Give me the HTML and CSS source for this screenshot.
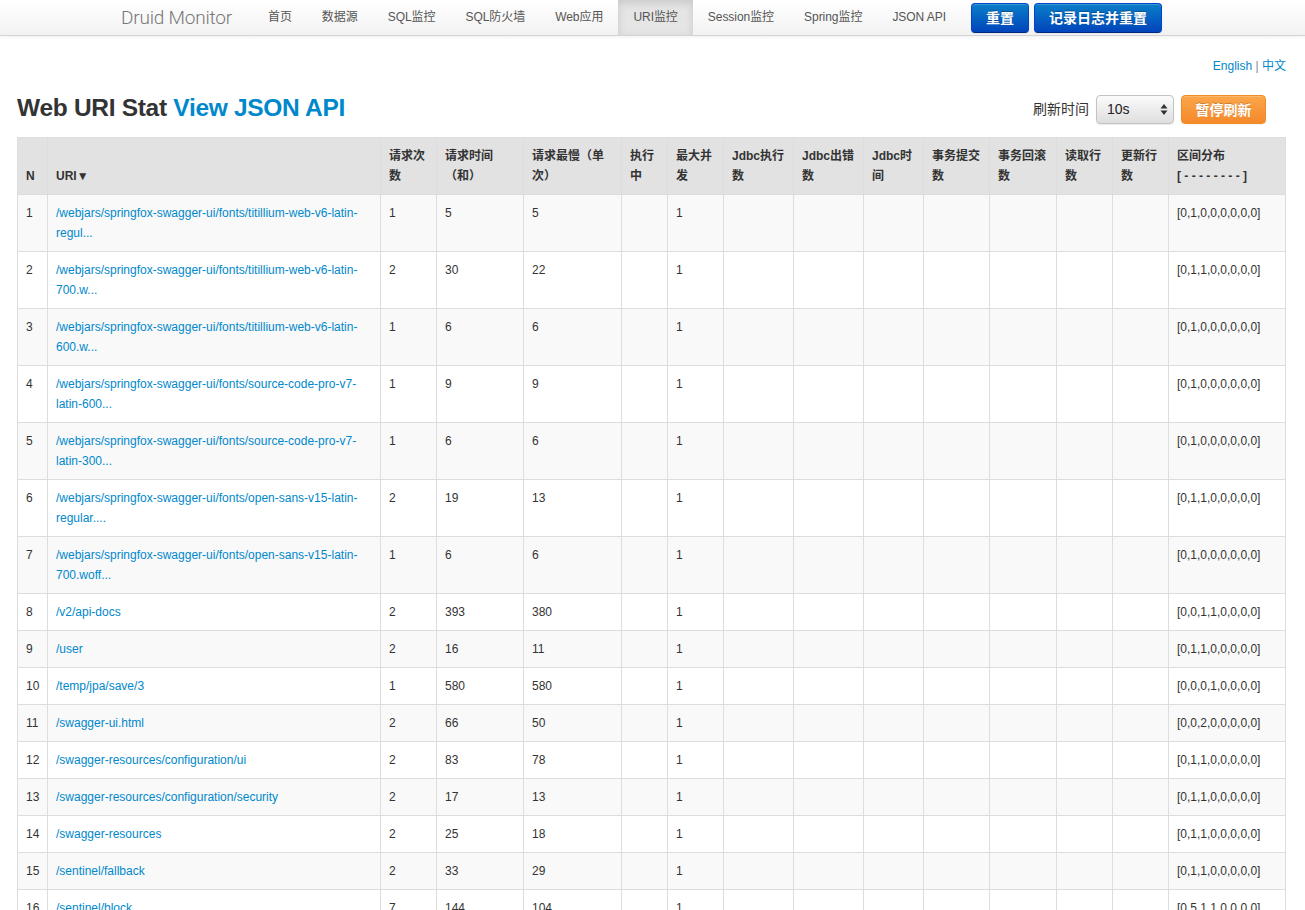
FILE: index.html
```html
<!DOCTYPE html>
<html lang="zh-CN">
<head>
<meta charset="utf-8">
<title>Druid Monitor - URI监控</title>
<link rel="stylesheet" href="styles.css">
</head>
<body>
<div class="navbar">
  <span class="brand">Druid Monitor</span>
  <a class="nav-link">首页</a>
  <a class="nav-link">数据源</a>
  <a class="nav-link">SQL监控</a>
  <a class="nav-link">SQL防火墙</a>
  <a class="nav-link">Web应用</a>
  <a class="nav-link active">URI监控</a>
  <a class="nav-link">Session监控</a>
  <a class="nav-link">Spring监控</a>
  <a class="nav-link">JSON API</a>
  <div class="nav-buttons">
    <button class="btn-primary">重置</button>
    <button class="btn-primary">记录日志并重置</button>
  </div>
</div>

<div class="main">
  <div class="lang"><a>English</a> <span class="sep">|</span> <a>中文</a></div>
  <div class="titlebar">
    <h3>Web URI Stat <a class="json-link">View JSON API</a></h3>
    <div class="refresh">
      <span class="refresh-label">刷新时间</span>
      <div class="select">
        <span>10s</span>
        <svg width="8" height="13" viewBox="0 0 8 13"><path d="M4 1 L7.5 5.5 H0.5 Z M4 12 L7.5 7.5 H0.5 Z" fill="#333"/></svg>
      </div>
      <button class="btn-warning">暂停刷新</button>
    </div>
  </div>

  <table class="stat">
    <colgroup>
      <col class="c-n">
      <col>
      <col class="c-56">
      <col class="c-87">
      <col class="c-98">
      <col class="c-46">
      <col class="c-56">
      <col class="c-70">
      <col class="c-70">
      <col class="c-60">
      <col class="c-66">
      <col class="c-67">
      <col class="c-56">
      <col class="c-56">
      <col class="c-last">
    </colgroup>
    <thead>
      <tr>
        <th>N</th>
        <th>URI▼</th>
        <th>请求次数</th>
        <th>请求时间（和）</th>
        <th>请求最慢（单次）</th>
        <th>执行中</th>
        <th>最大并发</th>
        <th>Jdbc执行数</th>
        <th>Jdbc出错数</th>
        <th>Jdbc时间</th>
        <th>事务提交数</th>
        <th>事务回滚数</th>
        <th>读取行数</th>
        <th>更新行数</th>
        <th>区间分布<br>[ - - - - - - - - ]</th>
      </tr>
    </thead>
    <tbody>
      <tr><td>1</td><td><a>/webjars/springfox-swagger-ui/fonts/titillium-web-v6-latin-regul...</a></td><td>1</td><td>5</td><td>5</td><td></td><td>1</td><td></td><td></td><td></td><td></td><td></td><td></td><td></td><td>[0,1,0,0,0,0,0,0]</td></tr>
      <tr><td>2</td><td><a>/webjars/springfox-swagger-ui/fonts/titillium-web-v6-latin-700.w...</a></td><td>2</td><td>30</td><td>22</td><td></td><td>1</td><td></td><td></td><td></td><td></td><td></td><td></td><td></td><td>[0,1,1,0,0,0,0,0]</td></tr>
      <tr><td>3</td><td><a>/webjars/springfox-swagger-ui/fonts/titillium-web-v6-latin-600.w...</a></td><td>1</td><td>6</td><td>6</td><td></td><td>1</td><td></td><td></td><td></td><td></td><td></td><td></td><td></td><td>[0,1,0,0,0,0,0,0]</td></tr>
      <tr><td>4</td><td><a>/webjars/springfox-swagger-ui/fonts/source-code-pro-v7-latin-600...</a></td><td>1</td><td>9</td><td>9</td><td></td><td>1</td><td></td><td></td><td></td><td></td><td></td><td></td><td></td><td>[0,1,0,0,0,0,0,0]</td></tr>
      <tr><td>5</td><td><a>/webjars/springfox-swagger-ui/fonts/source-code-pro-v7-latin-300...</a></td><td>1</td><td>6</td><td>6</td><td></td><td>1</td><td></td><td></td><td></td><td></td><td></td><td></td><td></td><td>[0,1,0,0,0,0,0,0]</td></tr>
      <tr><td>6</td><td><a>/webjars/springfox-swagger-ui/fonts/open-sans-v15-latin-regular....</a></td><td>2</td><td>19</td><td>13</td><td></td><td>1</td><td></td><td></td><td></td><td></td><td></td><td></td><td></td><td>[0,1,1,0,0,0,0,0]</td></tr>
      <tr><td>7</td><td><a>/webjars/springfox-swagger-ui/fonts/open-sans-v15-latin-700.woff...</a></td><td>1</td><td>6</td><td>6</td><td></td><td>1</td><td></td><td></td><td></td><td></td><td></td><td></td><td></td><td>[0,1,0,0,0,0,0,0]</td></tr>
      <tr><td>8</td><td><a>/v2/api-docs</a></td><td>2</td><td>393</td><td>380</td><td></td><td>1</td><td></td><td></td><td></td><td></td><td></td><td></td><td></td><td>[0,0,1,1,0,0,0,0]</td></tr>
      <tr><td>9</td><td><a>/user</a></td><td>2</td><td>16</td><td>11</td><td></td><td>1</td><td></td><td></td><td></td><td></td><td></td><td></td><td></td><td>[0,1,1,0,0,0,0,0]</td></tr>
      <tr><td>10</td><td><a>/temp/jpa/save/3</a></td><td>1</td><td>580</td><td>580</td><td></td><td>1</td><td></td><td></td><td></td><td></td><td></td><td></td><td></td><td>[0,0,0,1,0,0,0,0]</td></tr>
      <tr><td>11</td><td><a>/swagger-ui.html</a></td><td>2</td><td>66</td><td>50</td><td></td><td>1</td><td></td><td></td><td></td><td></td><td></td><td></td><td></td><td>[0,0,2,0,0,0,0,0]</td></tr>
      <tr><td>12</td><td><a>/swagger-resources/configuration/ui</a></td><td>2</td><td>83</td><td>78</td><td></td><td>1</td><td></td><td></td><td></td><td></td><td></td><td></td><td></td><td>[0,1,1,0,0,0,0,0]</td></tr>
      <tr><td>13</td><td><a>/swagger-resources/configuration/security</a></td><td>2</td><td>17</td><td>13</td><td></td><td>1</td><td></td><td></td><td></td><td></td><td></td><td></td><td></td><td>[0,1,1,0,0,0,0,0]</td></tr>
      <tr><td>14</td><td><a>/swagger-resources</a></td><td>2</td><td>25</td><td>18</td><td></td><td>1</td><td></td><td></td><td></td><td></td><td></td><td></td><td></td><td>[0,1,1,0,0,0,0,0]</td></tr>
      <tr><td>15</td><td><a>/sentinel/fallback</a></td><td>2</td><td>33</td><td>29</td><td></td><td>1</td><td></td><td></td><td></td><td></td><td></td><td></td><td></td><td>[0,1,1,0,0,0,0,0]</td></tr>
      <tr><td>16</td><td><a>/sentinel/block</a></td><td>7</td><td>144</td><td>104</td><td></td><td>1</td><td></td><td></td><td></td><td></td><td></td><td></td><td></td><td>[0,5,1,1,0,0,0,0]</td></tr>
    </tbody>
  </table>
</div>
</body>
</html>
```

FILE: styles.css
```css
body {
  margin: 0;
  font-family: "Liberation Sans", "Noto Sans CJK SC", sans-serif;
  font-size: 12px;
  line-height: 20px;
  color: #333;
  background: #fff;
}

a {
  color: #0088cc;
  text-decoration: none;
  cursor: pointer;
}

/* ---------- navbar ---------- */
.navbar {
  height: 35px;
  display: flex;
  align-items: center;
  padding-left: 121px;
  background: linear-gradient(to bottom, #ffffff, #f2f2f2);
  border-bottom: 1px solid #d4d4d4;
  box-shadow: 0 1px 4px rgba(0, 0, 0, 0.065);
}

.brand {
  font-family: "Roboto", "Liberation Sans", sans-serif;
  font-weight: 300;
  font-size: 19px;
  color: #777;
  margin-right: 21px;
  letter-spacing: -0.2px;
}

.nav-link {
  display: block;
  padding: 0 15px;
  line-height: 35px;
  height: 35px;
  color: #555;
  font-size: 12px;
  letter-spacing: -0.05px;
}

.nav-link.active {
  background: #e5e5e5;
  box-shadow: inset 0 3px 8px rgba(0, 0, 0, 0.125);
  color: #555;
}

.nav-buttons {
  display: flex;
  gap: 5px;
  margin-left: 10px;
}

.btn-primary {
  height: 30px;
  padding: 0 14px;
  border: 1px solid #04c;
  border-color: #0044cc #0044cc #002a80;
  border-radius: 4px;
  background: linear-gradient(to bottom, #0a7fc8, #0044bb);
  color: #fff;
  font-family: "Liberation Sans", "Noto Sans CJK SC", sans-serif;
  font-size: 14px;
  font-weight: bold;
  line-height: 28px;
  text-shadow: 0 -1px 0 rgba(0, 0, 0, 0.25);
  box-shadow: inset 0 1px 0 rgba(255, 255, 255, 0.2), 0 1px 2px rgba(0, 0, 0, 0.05);
}

/* ---------- main ---------- */
.main {
  padding: 0 19px 0 17px;
}

.lang {
  margin-top: 20px;
  text-align: right;
  line-height: 20px;
}

.lang .sep {
  color: #888;
}

.titlebar {
  display: flex;
  justify-content: space-between;
  align-items: center;
  margin-top: 12px;
  height: 40px;
}

.titlebar h3 {
  margin: 0;
  font-size: 24.5px;
  line-height: 40px;
  font-weight: bold;
  color: #333;
  letter-spacing: -0.3px;
}

.json-link {
  color: #0088cc;
}

.refresh {
  display: flex;
  align-items: center;
  margin-right: 20px;
  padding-top: 2px;
}

.refresh-label {
  font-size: 14px;
  color: #333;
  margin-right: 7px;
}

.select {
  width: 78px;
  height: 29px;
  box-sizing: border-box;
  display: flex;
  align-items: center;
  justify-content: space-between;
  padding: 0 5px 0 10px;
  border: 1px solid #c3c3c3;
  border-radius: 4px;
  background: linear-gradient(to bottom, #fbfbfb, #dedede);
  box-shadow: 0 1px 1px rgba(0, 0, 0, 0.08);
  font-size: 14px;
  color: #222;
  margin-right: 7px;
}

.btn-warning {
  width: 85px;
  height: 29px;
  padding: 0;
  border: 1px solid #ef8e20;
  border-radius: 4px;
  background: linear-gradient(to bottom, #fba64a, #f5892a);
  color: #fff;
  font-family: "Liberation Sans", "Noto Sans CJK SC", sans-serif;
  font-size: 14px;
  font-weight: bold;
  text-shadow: 0 -1px 0 rgba(0, 0, 0, 0.2);
  box-shadow: inset 0 1px 0 rgba(255, 255, 255, 0.2), 0 1px 2px rgba(0, 0, 0, 0.05);
}

/* ---------- table ---------- */
.stat {
  margin-top: 9px;
  width: 100%;
  table-layout: fixed;
  border-collapse: collapse;
  border: 1px solid #dddddd;
}

.c-n { width: 30px; }
.c-46 { width: 46px; }
.c-56 { width: 56px; }
.c-60 { width: 60px; }
.c-66 { width: 66px; }
.c-67 { width: 67px; }
.c-70 { width: 70px; }
.c-87 { width: 87px; }
.c-98 { width: 98px; }
.c-last { width: 117px; }

.stat th,
.stat td {
  padding: 8px;
  border: 1px solid #dddddd;
  text-align: left;
  line-height: 20px;
  font-size: 12px;
}

.stat th {
  vertical-align: bottom;
  background: #e2e2e2;
  font-weight: bold;
  color: #333;
}

.stat td {
  vertical-align: top;
}

.stat tbody tr:nth-child(odd) td {
  background: #f9f9f9;
}
```
